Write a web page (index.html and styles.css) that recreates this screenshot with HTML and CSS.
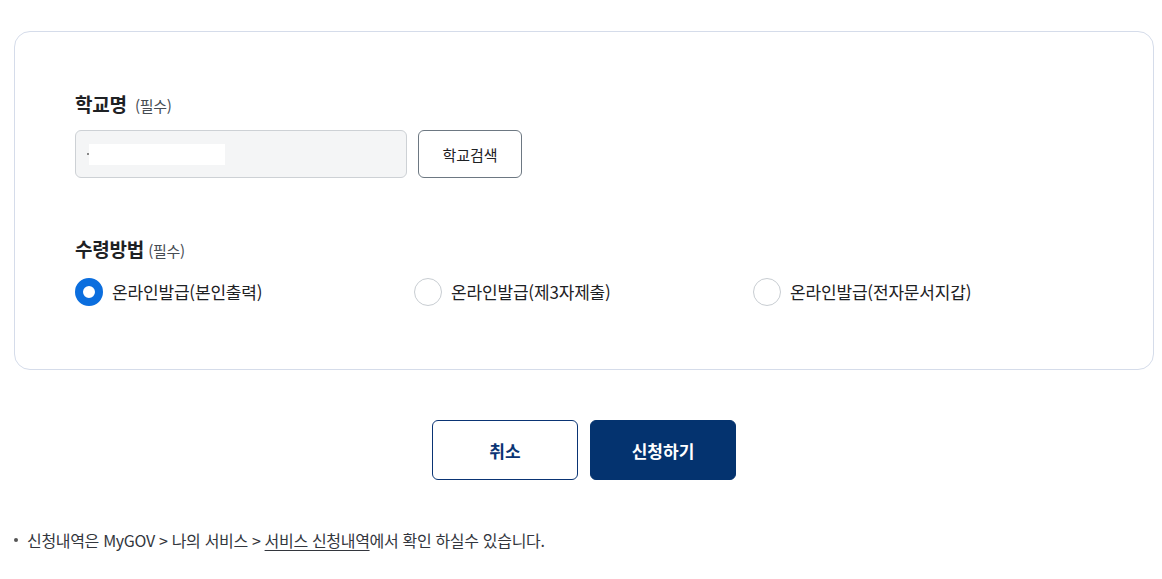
FILE: index.html
```html
<!DOCTYPE html>
<html lang="ko">
<head>
<meta charset="utf-8">
<link rel="stylesheet" href="styles.css">
</head>
<body>
<div class="page">
  <section class="card">
    <div class="field">
      <h3 class="label">학교명 <span class="req">(필수)</span></h3>
      <div class="search-row">
        <div class="input"><span class="dot"></span><span class="mask"></span></div>
        <button class="btn-search" type="button">학교검색</button>
      </div>
    </div>
    <div class="field field-2">
      <h3 class="label">수령방법 <span class="req small">(필수)</span></h3>
      <div class="radios">
        <label class="radio"><span class="circle checked"></span>온라인발급(본인출력)</label>
        <label class="radio"><span class="circle"></span>온라인발급(제3자제출)</label>
        <label class="radio"><span class="circle"></span>온라인발급(전자문서지갑)</label>
      </div>
    </div>
  </section>
  <div class="actions">
    <button class="btn btn-line" type="button">취소</button>
    <button class="btn btn-fill" type="button">신청하기</button>
  </div>
  <p class="note"><span class="bullet"></span>신청내역은 MyGOV &gt; 나의 서비스 &gt; <u>서비스 신청내역</u>에서 확인 하실수 있습니다.</p>
</div>
</body>
</html>
```

FILE: styles.css
```css
* { box-sizing: border-box; }
html, body { margin: 0; padding: 0; background: #fff; }
body {
  font-family: "Noto Sans CJK KR", "Noto Sans", sans-serif;
  color: #1e2124;
  letter-spacing: -0.03em;
}
.page { width: 1140px; margin-left: 14px; padding-top: 31px; }
.card {
  border: 1px solid #d5dcea;
  border-radius: 16px;
  padding: 58px 60px 63px;
}
.label {
  margin: 0;
  font-size: 19px;
  font-weight: 700;
  line-height: 28px;
  color: #1e2124;
  letter-spacing: -0.01em;
}
.req { font-size: 15px; font-weight: 400; color: #464c53; margin-left: 3px; letter-spacing: -0.02em; }
.req.small { margin-left: -1px; }
.search-row { display: flex; gap: 11px; margin-top: 10px; }
.input {
  width: 332px; height: 48px;
  background: #f4f5f6;
  border: 1px solid #cdd1d5;
  border-radius: 6px;
  display: flex; align-items: center;
  padding-left: 11px;
}
.dot { width: 2px; height: 2px; background: #888; }
.mask { width: 136px; height: 21px; background: #fff; }
.btn-search {
  width: 104px; height: 48px;
  background: #fff;
  border: 1px solid #6d7882;
  border-radius: 6px;
  font-family: inherit;
  font-size: 15px;
  color: #1e2124;
  letter-spacing: 0;
}
.field-2 { margin-top: 57px; }
.radios { display: flex; margin-top: 13px; }
.radio {
  width: 339px;
  display: flex; align-items: center; gap: 9px;
  font-size: 17px; line-height: 28px; color: #1e2124;
  letter-spacing: -0.01em;
}
.circle {
  width: 28px; height: 28px; border-radius: 50%;
  border: 1px solid #c8cdd2; background: #fff;
  flex: none;
}
.circle.checked { border: 8px solid #0b6ede; }
.actions { display: flex; justify-content: center; gap: 12px; margin-top: 50px; }
.btn {
  width: 146px; height: 60px;
  border-radius: 6px;
  font-family: inherit;
  font-size: 17px; font-weight: 700;
  letter-spacing: 0;
}
.btn-line { background: #fff; border: 1px solid #0a3474; color: #0a3474; }
.btn-fill { background: #04336f; border: 1px solid #04336f; color: #fff; }
.note {
  margin: 48px 0 0 0;
  font-size: 16px; line-height: 24px; color: #33363d;
  display: flex; align-items: center;
  letter-spacing: -0.02em;
}
.bullet { width: 4px; height: 4px; background: #555; border-radius: 50%; margin: 0 9px 0 0; flex: none; }
.note u { text-underline-offset: 3px; margin-left: 4px; }
```
